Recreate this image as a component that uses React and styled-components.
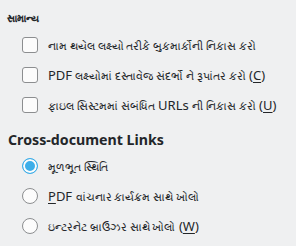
import React from 'react';
import styled, { createGlobalStyle } from 'styled-components';

const GlobalStyle = createGlobalStyle`
  html, body {
    margin: 0;
    padding: 0;
    background: #eff0f1;
  }
  body {
    font-family: "Noto Sans", "Open Sans", sans-serif;
    color: #232629;
  }
`;

const Page = styled.div`
  width: 296px;
  height: 246px;
  padding: 11px 0 0 7px;
  box-sizing: border-box;
  overflow: hidden;
`;

const GroupTitle = styled.div`
  font-size: 10px;
  font-weight: 700;
  line-height: 14px;
  margin-bottom: 12px;
`;

const SectionTitle = styled.div`
  font-size: 14.2px;
  font-weight: 700;
  line-height: 20px;
  margin: 17px 0 8px 1px;
`;

const OptionList = styled.div`
  display: flex;
  flex-direction: column;
  gap: 14px;
  padding-left: 15px;
`;

const Option = styled.label`
  display: flex;
  align-items: center;
  gap: 10px;
  font-size: 13px;
  line-height: 16px;
  height: 16px;
  white-space: nowrap;
`;

const Gu = styled.span`
  font-size: 10.9px;
`;

const CheckBox = styled.span`
  width: 14px;
  height: 14px;
  flex: none;
  border: 1px solid #8c8e90;
  border-radius: 3px;
  background: #fcfcfc;
`;

const Radio = styled.span`
  width: 14px;
  height: 14px;
  flex: none;
  border-radius: 50%;
  border: 1px solid ${(p) => (p.checked ? '#3daee9' : '#8c8e90')};
  background: ${(p) => (p.checked ? '#3daee9' : '#fcfcfc')};
  box-shadow: ${(p) => (p.checked ? 'inset 0 0 0 2px #fcfcfc' : 'none')};
`;

const Mn = styled.span`
  text-decoration: underline;
  text-underline-offset: 2px;
`;

const App = () => (
  <>
    <GlobalStyle />
    <Page>
      <GroupTitle>સામાન્ય</GroupTitle>
      <OptionList>
        <Option><CheckBox /><span><Gu>નામ થયેલ લક્ષ્યો તરીકે બુકમાર્કોની નિકાસ કરો</Gu></span></Option>
        <Option><CheckBox /><span>PDF <Gu>લક્ષ્યોમાં દસ્તાવેજ સંદર્ભો ને રૂપાંતર કરો</Gu> (<Mn>C</Mn>)</span></Option>
        <Option><CheckBox /><span><Gu>ફાઇલ સિસ્ટમમાં સંબંધિત</Gu> URLs <Gu>ની નિકાસ કરો</Gu> (<Mn>U</Mn>)</span></Option>
      </OptionList>
      <SectionTitle>Cross-document Links</SectionTitle>
      <OptionList>
        <Option><Radio checked /><span><Gu>મૂળભૂત સ્થિતિ</Gu></span></Option>
        <Option><Radio /><span><Mn>P</Mn>DF <Gu>વાંચનાર કાર્યક્રમ સાથે ખોલો</Gu></span></Option>
        <Option><Radio /><span><Gu>ઇન્ટરનેટ બ્રાઉઝર સાથે ખોલો</Gu> (<Mn>W</Mn>)</span></Option>
      </OptionList>
    </Page>
  </>
);

export default App;
